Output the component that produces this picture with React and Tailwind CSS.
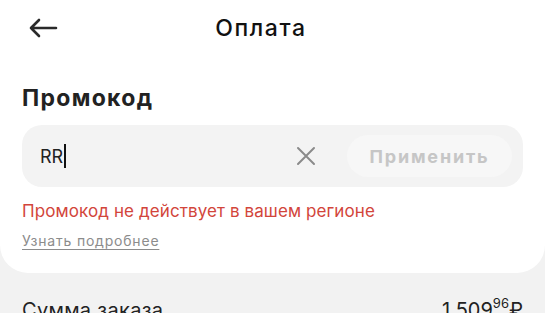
import React from "react";

export default function App() {
  return (
    <div className="w-[545px] h-[313px] overflow-hidden bg-[#f2f2f2]" style={{ fontFamily: "Inter, 'Noto Sans', sans-serif" }}>
      <div className="bg-white rounded-b-[28px] h-[273px] flex flex-col">
        <div className="h-[56px] flex items-center relative px-[28px]">
          <svg width="30" height="20" viewBox="0 0 30 20" fill="none" stroke="#2a2a2a" strokeWidth="2.6" strokeLinecap="round" strokeLinejoin="round">
            <path d="M28 10H3M11 2L3 10l8 8" />
          </svg>
          <div className="absolute left-0 right-0 top-0 h-[56px] flex items-center justify-center pointer-events-none">
            <span className="text-[23px] font-medium text-[#111] tracking-[1.6px] ml-[-23px]">Оплата</span>
          </div>
        </div>
        <div className="px-[22px] pt-[28px]">
          <div className="text-[23px] font-bold text-[#222] leading-[28px] tracking-[1.3px]">Промокод</div>
          <div className="mt-[13px] h-[62px] rounded-[20px] bg-[#f3f3f3] flex items-center pl-[18px] pr-[11px]">
            <div className="flex-1 flex items-center text-[18px] text-[#222]">
              <span>RR</span>
              <span className="w-[2px] h-[24px] bg-[#111] ml-[1px]"></span>
            </div>
            <svg width="20" height="20" viewBox="0 0 20 20" stroke="#8a8a8a" strokeWidth="2" strokeLinecap="round" className="mr-[31px]">
              <path d="M2 2l16 16M18 2L2 18" />
            </svg>
            <div className="w-[165px] h-[42px] rounded-full bg-[#f7f7f7] flex items-center justify-center text-[18px] font-bold text-[#c6c6c6] tracking-[1.8px]">
              Применить
            </div>
          </div>
          <div className="mt-[13px] text-[17px] text-[#d2453b] leading-[22px] tracking-[0.1px]">Промокод не действует в вашем регионе</div>
          <div className="mt-[10px] text-[14px] text-[#8c8c8c] underline underline-offset-[3px] leading-[18px] tracking-[0.8px]">Узнать подробнее</div>
        </div>
      </div>
      <div className="px-[22px] pt-[23px] flex justify-between items-start text-[20px] text-[#222] leading-[28px]">
        <span className="tracking-[0.3px]">Сумма заказа</span>
        <div className="flex items-start">
          <span>1 509</span>
          <span className="text-[13px] leading-none mt-[1px]">96</span>
          <span>₽</span>
        </div>
      </div>
    </div>
  );
}
